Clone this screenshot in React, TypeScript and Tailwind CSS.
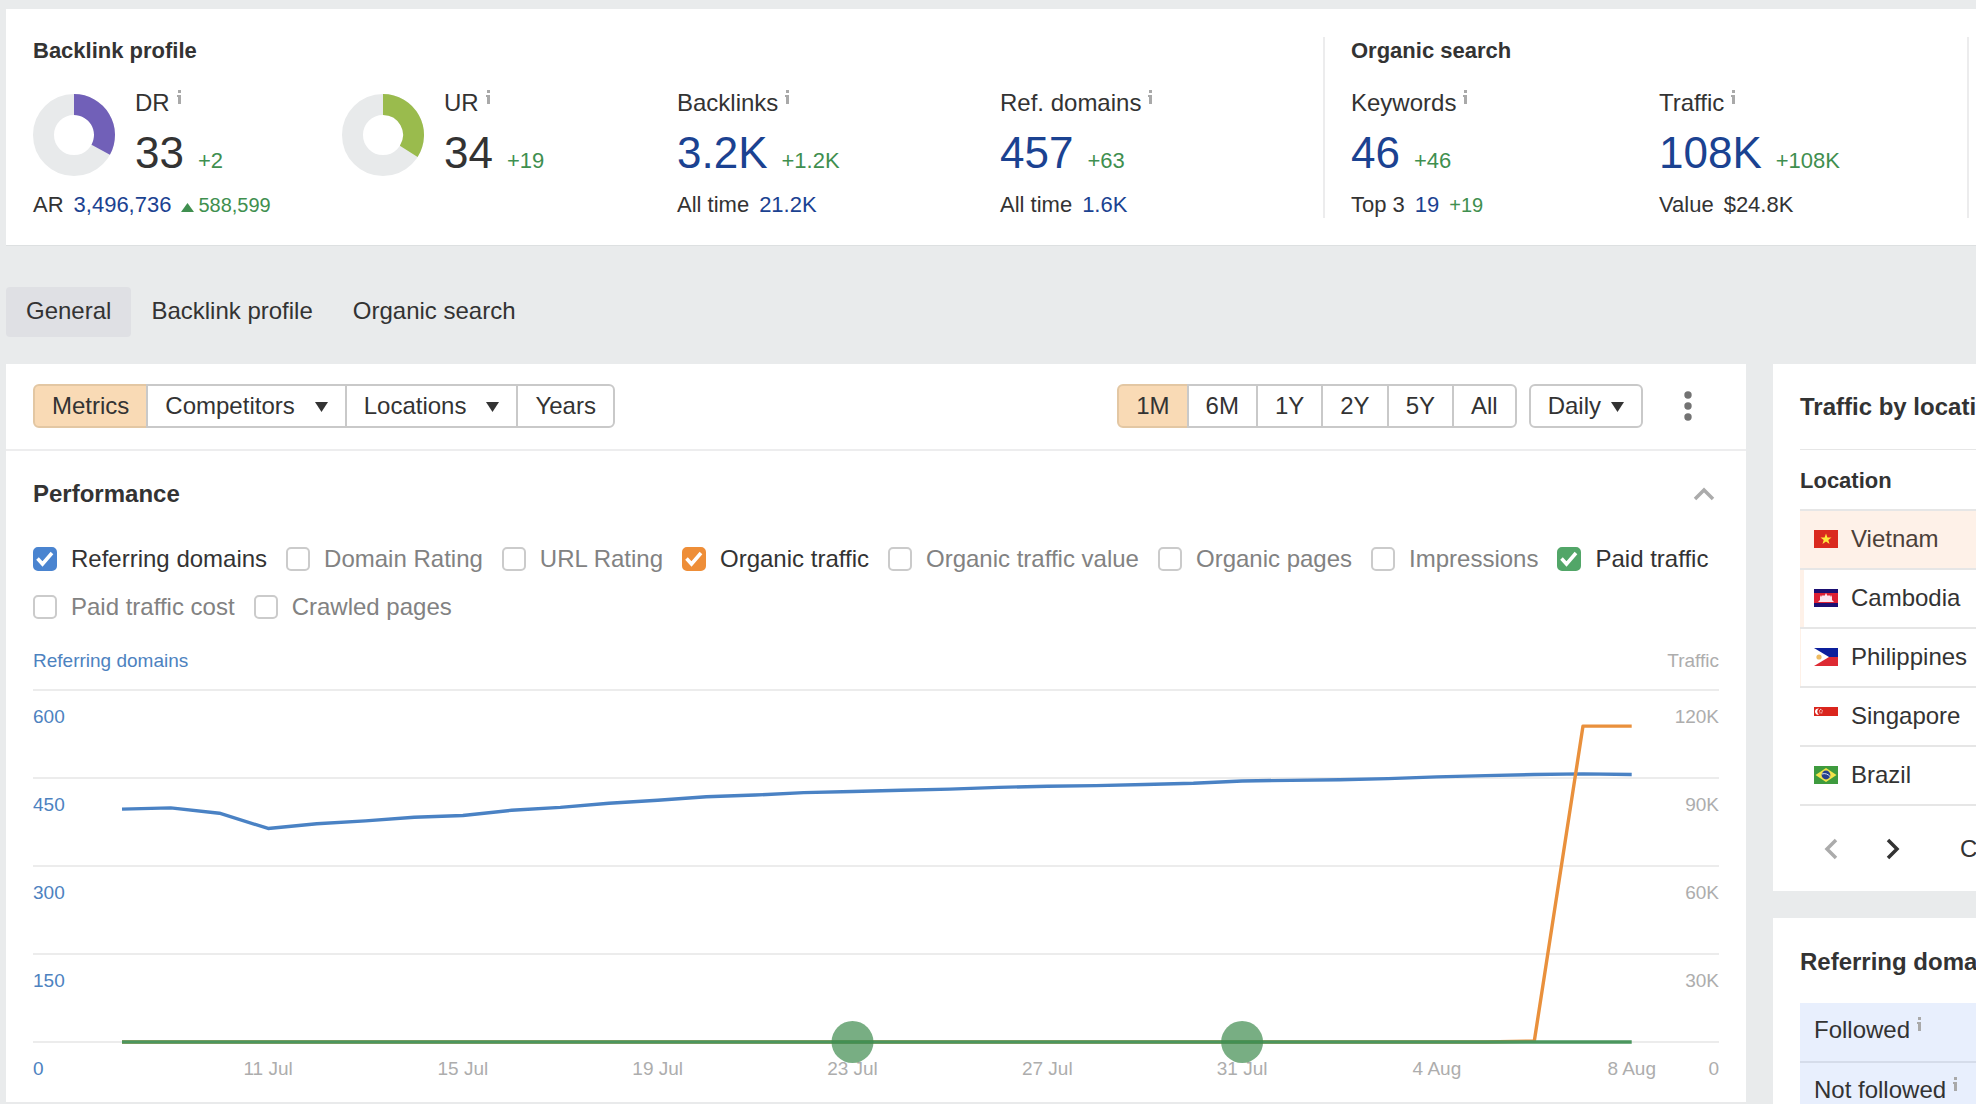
import { useState } from 'react';
import type { ReactNode } from 'react';
import clsx from 'clsx';

const referringDomains = [
  397, 399, 390, 364, 372, 377, 383, 386, 395, 400, 407, 412, 418, 421, 425, 427,
  429, 431, 434, 436, 437, 439, 441, 445, 446, 447, 449, 452, 454, 456, 457, 456,
];
const organicTraffic = [...Array(29).fill(0), 300, 107700, 107700];
const paidTraffic = Array(32).fill(0);

const dateLabels = ['11 Jul', '15 Jul', '19 Jul', '23 Jul', '27 Jul', '31 Jul', '4 Aug', '8 Aug'];
const leftAxis = ['600', '450', '300', '150', '0'];
const rightAxis = ['120K', '90K', '60K', '30K', '0'];

const metricOptions = [
  { id: 'referring-domains', label: 'Referring domains', color: 'checked:bg-[#4a84d0] checked:border-[#4a84d0]' },
  { id: 'domain-rating', label: 'Domain Rating', color: 'checked:bg-[#7160b8] checked:border-[#7160b8]' },
  { id: 'url-rating', label: 'URL Rating', color: 'checked:bg-[#9abb4d] checked:border-[#9abb4d]' },
  { id: 'organic-traffic', label: 'Organic traffic', color: 'checked:bg-[#ee8e38] checked:border-[#ee8e38]' },
  { id: 'organic-traffic-value', label: 'Organic traffic value', color: 'checked:bg-[#4a84d0] checked:border-[#4a84d0]' },
  { id: 'organic-pages', label: 'Organic pages', color: 'checked:bg-[#4a84d0] checked:border-[#4a84d0]' },
  { id: 'impressions', label: 'Impressions', color: 'checked:bg-[#4a84d0] checked:border-[#4a84d0]' },
  { id: 'paid-traffic', label: 'Paid traffic', color: 'checked:bg-[#52a668] checked:border-[#52a668]' },
  { id: 'paid-traffic-cost', label: 'Paid traffic cost', color: 'checked:bg-[#4a84d0] checked:border-[#4a84d0]' },
  { id: 'crawled-pages', label: 'Crawled pages', color: 'checked:bg-[#4a84d0] checked:border-[#4a84d0]' },
];

function InfoMark() {
  return (
    <svg width="5" height="14" viewBox="0 0 5 14" className="mt-px shrink-0" fill="#a9a9a9" aria-hidden="true">
      <rect x="1" y="0" width="3" height="3" />
      <path d="M0 5h4v9H1V7H0z" />
    </svg>
  );
}

function Caret() {
  return (
    <svg width="13" height="10" viewBox="0 0 13 10" className="mt-0.5" fill="#333" aria-hidden="true">
      <path d="M0 0h13L6.5 10z" />
    </svg>
  );
}

// Anillo con el porcentaje coloreado desde las 12 en punto
function Donut({ value, color }: { value: number; color: string }) {
  const angle = (value / 100) * Math.PI * 2;
  const sin = Math.sin(angle);
  const cos = Math.cos(angle);
  const outer = 41;
  const inner = 20;
  return (
    <svg width="82" height="84" viewBox="0 0 82 84" className="shrink-0" aria-hidden="true">
      <circle cx="41" cy="42" r="30.5" fill="none" stroke="#e8eaeb" strokeWidth="21" />
      <path
        fill={color}
        d={`M41 ${42 - outer}A${outer} ${outer} 0 0 1 ${41 + outer * sin} ${42 - outer * cos}L${41 + inner * sin} ${
          42 - inner * cos
        }A${inner} ${inner} 0 0 0 41 ${42 - inner}z`}
      />
    </svg>
  );
}

interface MetricProps {
  label: string;
  value: string;
  delta: string;
  link?: boolean;
  chart?: ReactNode;
  children?: ReactNode;
}

function Metric({ label, value, delta, link = true, chart, children }: MetricProps) {
  return (
    <div>
      <div className="flex items-end gap-5">
        {chart}
        <div>
          <div className="flex gap-[7px] text-[24px] leading-7">
            {label}
            <InfoMark />
          </div>
          <div className="flex items-baseline gap-3.5 mt-3 leading-12">
            {link ? (
              <a href="#" className="text-[44px] text-[#1b4291]">{value}</a>
            ) : (
              <span className="text-[44px]">{value}</span>
            )}
            <span className="text-[22px] leading-none text-[#3f8f4f]">{delta}</span>
          </div>
        </div>
      </div>
      <div className="flex items-baseline gap-2.5 mt-[15px] text-[22px] leading-[26px]">{children}</div>
    </div>
  );
}

function ProfileSummary() {
  return (
    <section className="bg-white border-b border-[#dde0e1] pl-[27px] pr-[7px] pt-7 pb-[27px] grid grid-cols-[1290fr_646fr]">
      <div>
        <h2 className="text-[22px] leading-7 font-bold">Backlink profile</h2>
        <div className="grid grid-cols-[309fr_335fr_323fr_323fr] mt-6">
          <Metric label="DR" value="33" delta="+2" link={false} chart={<Donut value={33} color="#7160b8" />}>
            <span>AR</span>
            <a href="#" className="text-[#1b4291]">3,496,736</a>
            <span className="flex items-baseline gap-1 text-[20px] text-[#3f8f4f]">
              <svg width="13" height="9" viewBox="0 0 13 9" fill="#3f8f4f" aria-hidden="true">
                <path d="M0 9h13L6.5 0z" />
              </svg>
              588,599
            </span>
          </Metric>
          <Metric label="UR" value="34" delta="+19" link={false} chart={<Donut value={34} color="#9abb4d" />} />
          <Metric label="Backlinks" value="3.2K" delta="+1.2K">
            <span>All time</span>
            <a href="#" className="text-[#1b4291]">21.2K</a>
          </Metric>
          <Metric label="Ref. domains" value="457" delta="+63">
            <span>All time</span>
            <a href="#" className="text-[#1b4291]">1.6K</a>
          </Metric>
        </div>
      </div>
      <div className="border-x-2 border-[#ececed] pl-[26px]">
        <h2 className="text-[22px] leading-7 font-bold">Organic search</h2>
        <div className="grid grid-cols-2 mt-6">
          <Metric label="Keywords" value="46" delta="+46">
            <span>Top 3</span>
            <a href="#" className="text-[#1b4291]">19</a>
            <span className="text-[20px] text-[#3f8f4f]">+19</span>
          </Metric>
          <Metric label="Traffic" value="108K" delta="+108K">
            <span>Value</span>
            <span>$24.8K</span>
          </Metric>
        </div>
      </div>
    </section>
  );
}

function Segment({ active, onClick, children }: { active?: boolean; onClick?: () => void; children: ReactNode }) {
  return (
    <button
      type="button"
      onClick={onClick}
      className={clsx(
        'flex items-center gap-5 h-11 px-[17px] -ml-0.5 first:ml-0 border-2 first:rounded-l-md last:rounded-r-md',
        active ? 'bg-[#f9dab5] border-[#e3c7a3]' : 'bg-white border-[#c9c9c9]'
      )}
    >
      {children}
    </button>
  );
}

function Toolbar() {
  const [range, setRange] = useState('1M');
  return (
    <div className="flex items-center justify-between pl-[27px] pr-[54px] pt-5 pb-[21px] border-b-2 border-[#ededee]">
      <div className="flex">
        <Segment active>Metrics</Segment>
        <Segment>
          Competitors
          <Caret />
        </Segment>
        <Segment>
          Locations
          <Caret />
        </Segment>
        <Segment>Years</Segment>
      </div>
      <div className="flex items-center">
        <div className="flex">
          {['1M', '6M', '1Y', '2Y', '5Y', 'All'].map((item) => (
            <Segment key={item} active={item === range} onClick={() => setRange(item)}>
              {item}
            </Segment>
          ))}
        </div>
        <button
          type="button"
          className="flex items-center gap-2.5 h-11 ml-3 px-[17px] border-2 border-[#c9c9c9] rounded-md"
        >
          Daily
          <Caret />
        </button>
        <button type="button" className="ml-[41px]" aria-label="More">
          <svg width="8" height="30" viewBox="0 0 8 30" fill="#737373">
            <circle cx="4" cy="4" r="3.7" />
            <circle cx="4" cy="15" r="3.7" />
            <circle cx="4" cy="26" r="3.7" />
          </svg>
        </button>
      </div>
    </div>
  );
}

function MetricToggles() {
  const [selected, setSelected] = useState(['referring-domains', 'organic-traffic', 'paid-traffic']);

  const toggle = (id: string) => {
    setSelected((prev) => (prev.includes(id) ? prev.filter((x) => x !== id) : [...prev, id]));
  };

  return (
    <div className="flex flex-wrap gap-x-[19px] gap-y-6 mt-[39px]">
      {metricOptions.map(({ id, label, color }) => {
        const checked = selected.includes(id);
        return (
          <label
            key={id}
            htmlFor={id}
            className={clsx('flex items-center gap-3.5 leading-6', checked ? 'text-[#333]' : 'text-[#828282]')}
          >
            <span className="grid size-6">
              <input
                id={id}
                type="checkbox"
                checked={checked}
                onChange={() => toggle(id)}
                className={clsx(
                  'appearance-none col-start-1 row-start-1 size-6 rounded-[5px] border-2 border-[#cbcbcb] bg-white',
                  color
                )}
              />
              {checked && (
                <svg viewBox="0 0 24 24" className="col-start-1 row-start-1 size-6 pointer-events-none" aria-hidden="true">
                  <path d="M4.5 11.5l5 5.5L19 6" fill="none" stroke="#fff" strokeWidth="3.5" />
                </svg>
              )}
            </span>
            {label}
          </label>
        );
      })}
    </div>
  );
}

const chartX = (i: number) => 89 + i * 48.7;

function linePoints(values: number[], max: number) {
  return values.map((v, i) => `${chartX(i)},${402 - (v / max) * 352}`).join(' ');
}

function PerformanceChart() {
  return (
    <svg viewBox="0 0 1686 462" className="block w-full h-auto mt-[21px] text-[19px]" role="img" aria-label="Performance">
      {leftAxis.map((_, i) => (
        <rect key={i} x="0" y={49 + i * 88} width="1686" height="2" fill="#ececec" />
      ))}
      <text x="0" y="27" fill="#4d82bf">Referring domains</text>
      <text x="1686" y="27" fill="#adadad" textAnchor="end">Traffic</text>
      {leftAxis.map((label, i) => (
        <text key={label} x="0" y={83 + i * 88} fill="#4d82bf">{label}</text>
      ))}
      {rightAxis.map((label, i) => (
        <text key={label} x="1686" y={83 + i * 88} fill="#adadad" textAnchor="end">{label}</text>
      ))}
      {dateLabels.map((label, i) => (
        <text key={label} x={chartX(3 + i * 4)} y="435" fill="#adadad" textAnchor="middle">{label}</text>
      ))}
      <g fill="none" strokeWidth="3.4" strokeLinejoin="round">
        <polyline points={linePoints(referringDomains, 600)} stroke="#4a82c4" />
        <polyline points={linePoints(organicTraffic, 120000)} stroke="#e9903c" />
        <polyline points={linePoints(paidTraffic, 120000)} stroke="#4b965e" />
      </g>
      <circle cx={chartX(15)} cy="402" r="21" fill="#3f8b4e" fillOpacity="0.7" />
      <circle cx={chartX(23)} cy="402" r="21" fill="#3f8b4e" fillOpacity="0.7" />
    </svg>
  );
}

function Flag({ country }: { country: string }) {
  return (
    <svg width="24" height="18" viewBox="0 0 24 18" className="shrink-0" aria-hidden="true">
      {country === 'Vietnam' && (
        <>
          <path fill="#da2a1f" d="M0 0h24v18H0z" />
          <path fill="#ffe83c" d="M12 3.5l1.4 4h4.1l-3.2 2.5 1.2 4-3.5-2.4-3.5 2.4 1.2-4-3.2-2.5h4.1z" />
        </>
      )}
      {country === 'Cambodia' && (
        <>
          <path fill="#1c0f72" d="M0 0h24v18H0z" />
          <path fill="#dc1f33" d="M0 4h24v10H0z" />
          <path fill="#fbe5ee" d="M4 13l2-2V8l1-2 1 2V7l1-1 1 1 1-1 1-2 1 2 1 1 1-1 1 1v1l1-2 1 2v3l2 2z" />
        </>
      )}
      {country === 'Philippines' && (
        <>
          <path fill="#0c1f9c" d="M0 0h24v9H0z" />
          <path fill="#dd2a33" d="M0 9h24v9H0z" />
          <path fill="#fff" d="M0 0l15 9-15 9z" />
          <circle cx="5" cy="9" r="2.6" fill="#eebb62" />
        </>
      )}
      {country === 'Singapore' && (
        <>
          <path fill="#fff" d="M0 0h24v18H0z" />
          <path fill="#da251d" d="M0 0h24v9H0z" />
          <path fill="#fff" d="M5 1.5a3.2 3.2 0 1 0 0 6.2 3.6 3.6 0 0 1 0-6.2z" />
          <g fill="#fff">
            <circle cx="6.8" cy="2.4" r="0.6" />
            <circle cx="5.6" cy="3.9" r="0.6" />
            <circle cx="8.2" cy="3.9" r="0.6" />
            <circle cx="6" cy="5.8" r="0.6" />
            <circle cx="7.8" cy="5.8" r="0.6" />
          </g>
        </>
      )}
      {country === 'Brazil' && (
        <>
          <path fill="#3e9b3e" d="M0 0h24v18H0z" />
          <path fill="#f3e34b" d="M12 2l10.5 7L12 16 1.5 9z" />
          <circle cx="12" cy="9" r="4.4" fill="#27408b" />
          <path d="M8 8c3-1 6 0 8 2.5" fill="none" stroke="#dfe8f2" strokeWidth="1" />
        </>
      )}
    </svg>
  );
}

const locations = [
  { name: 'Vietnam', bar: 'w-full' },
  { name: 'Cambodia', bar: 'w-1' },
  { name: 'Philippines', bar: 'w-px' },
  { name: 'Singapore', bar: 'w-0' },
  { name: 'Brazil', bar: 'w-0' },
];

function TrafficByLocation() {
  return (
    <section className="bg-white pl-[27px] overflow-hidden">
      <h2 className="h-[86px] leading-[86px] font-bold border-b border-[#e6e6e6]">Traffic by location</h2>
      <table className="w-full border-collapse">
        <thead>
          <tr className="h-[60px] border-b-2 border-[#e6e6e6]">
            <th className="p-0 pt-0.5 text-left text-[22px] font-bold">Location</th>
          </tr>
        </thead>
        <tbody>
          {locations.map(({ name, bar }) => (
            <tr key={name} className="h-[59px] border-b-2 border-[#e6e6e6]">
              <td className="relative p-0 pb-0.5">
                <div className={clsx('absolute inset-y-0 left-0 bg-[#fef1e8]', bar)} />
                <div className={clsx('relative flex items-center gap-[13px] pl-3.5', name === 'Vietnam' && 'text-[#4b4039]')}>
                  <Flag country={name} />
                  {name}
                </div>
              </td>
            </tr>
          ))}
        </tbody>
      </table>
      <div className="flex items-center h-[85px] pl-6">
        <button type="button" aria-label="Previous page">
          <svg width="14" height="24" viewBox="0 0 14 24" fill="none" stroke="#ababab" strokeWidth="3.5">
            <path d="M12 3l-9 9 9 9" />
          </svg>
        </button>
        <button type="button" className="ml-12" aria-label="Next page">
          <svg width="14" height="24" viewBox="0 0 14 24" fill="none" stroke="#333" strokeWidth="3.5">
            <path d="M2 3l9 9-9 9" />
          </svg>
        </button>
        <span className="ml-[60px]">C</span>
      </div>
    </section>
  );
}

function ReferringDomainsCard() {
  return (
    <section className="bg-white pl-[27px] overflow-hidden flex-1">
      <h2 className="h-[85px] leading-[88px] font-bold">Referring domains</h2>
      <table className="w-full border-collapse bg-[#e8effd]">
        <tbody>
          {['Followed', 'Not followed'].map((label) => (
            <tr key={label} className="h-[59px] border-b-2 border-[#d5dcea]">
              <td className="p-0 pb-1 pl-3.5">
                <div className="flex gap-[7px] leading-7">
                  {label}
                  <InfoMark />
                </div>
              </td>
            </tr>
          ))}
        </tbody>
      </table>
    </section>
  );
}

export default function App() {
  const [tab, setTab] = useState('General');

  return (
    <div className="flex flex-col h-screen overflow-hidden bg-[#e9ebec] pt-[9px] pl-1.5 text-[24px] text-[#333] whitespace-nowrap font-['Helvetica_Neue','Liberation_Sans',Arial,sans-serif]">
      <ProfileSummary />

      <nav className="flex mt-[41px] mb-[27px] shrink-0">
        {['General', 'Backlink profile', 'Organic search'].map((item) => (
          <button
            key={item}
            type="button"
            onClick={() => setTab(item)}
            className={clsx('h-[50px] px-5 pb-0.5 rounded', tab === item && 'bg-[#dfe0e4]')}
          >
            {item}
          </button>
        ))}
      </nav>

      <div className="flex flex-1 min-h-0 gap-[27px]">
        <main className="flex-1 min-w-0 bg-white overflow-hidden">
          <Toolbar />
          <div className="px-[27px] pt-[29px] border-b-2 border-[#e9eaeb]">
            <div className="flex items-center justify-between leading-7">
              <h2 className="font-bold">Performance</h2>
              <button type="button" className="mr-1" aria-label="Collapse">
                <svg width="22" height="14" viewBox="0 0 22 14" fill="none" stroke="#ababab" strokeWidth="3.5">
                  <path d="M2 12l9-9 9 9" />
                </svg>
              </button>
            </div>
            <MetricToggles />
            <PerformanceChart />
          </div>
        </main>
        <aside className="flex flex-col gap-[27px] w-[203px] shrink-0">
          <TrafficByLocation />
          <ReferringDomainsCard />
        </aside>
      </div>
    </div>
  );
}
